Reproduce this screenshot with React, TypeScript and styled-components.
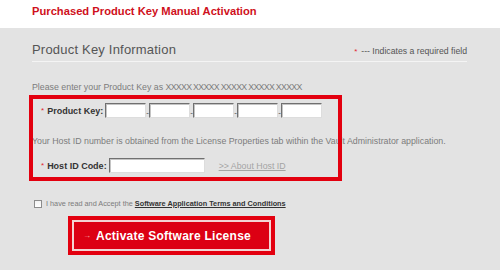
import styled, { createGlobalStyle } from "styled-components";

const GlobalStyle = createGlobalStyle`
  html, body {
    margin: 0;
    padding: 0;
    background: #e3e3e3;
    font-family: "Liberation Sans", Arial, sans-serif;
  }
`;

const Page = styled.div`
  width: 500px;
  min-height: 270px;
  background: #e3e3e3;
`;

const Header = styled.div`
  height: 28px;
  box-sizing: border-box;
  padding: 4px 0 0 32px;
  background: #ffffff;
`;

const Title = styled.h1`
  margin: 0;
  font-size: 11.2px;
  line-height: 14px;
  font-weight: bold;
  color: #cf1020;
`;

const Panel = styled.div`
  position: relative;
  padding: 0 33px 0 32px;
`;

const SectionHead = styled.div`
  display: flex;
  justify-content: space-between;
  align-items: baseline;
  padding: 15px 0 4px;
  border-bottom: 1px solid #f4f4f4;
`;

const SectionTitle = styled.h2`
  margin: 0;
  font-size: 13px;
  line-height: 14px;
  font-weight: normal;
  letter-spacing: 0.2px;
  color: #555555;
`;

const RequiredNote = styled.span`
  font-size: 8.7px;
  color: #555555;
`;

const Star = styled.span<{ $gap?: number }>`
  color: #e2262f;
  font-size: 8px;
  font-weight: normal;
  margin-right: ${(p) => p.$gap ?? 3}px;
`;

const Hint = styled.p<{ $top: number }>`
  margin: ${(p) => p.$top}px 0 0;
  font-size: 8.8px;
  line-height: 12px;
  color: #7c7c7c;
  white-space: nowrap;
`;

const Mask = styled.span`
  letter-spacing: -0.7px;
`;

const FieldRow = styled.div<{ $top: number }>`
  display: flex;
  align-items: center;
  margin-top: ${(p) => p.$top}px;
  padding-left: 9px;
`;

const Label = styled.label`
  font-size: 9px;
  font-weight: bold;
  color: #333333;
  margin-right: 2px;
  white-space: nowrap;
`;

const TextInput = styled.input<{ $w: number }>`
  box-sizing: border-box;
  width: ${(p) => p.$w}px;
  height: 15px;
  margin: 0;
  padding: 0 2px;
  background: #ffffff;
  border: 1px solid;
  border-color: #707070 #dddddd #dddddd #707070;
  box-shadow: inset 1px 1px 0 #c4c4c4;
  font-size: 9px;
  outline: none;
`;

const Dash = styled.span`
  width: 3px;
  font-size: 8px;
  color: #444444;
  text-align: center;
  padding-top: 4px;
`;

const HelpLink = styled.a`
  margin-left: 14px;
  font-size: 8.8px;
  color: #a4a4a4;
  text-decoration: underline;
`;

const CheckRow = styled.div`
  display: flex;
  align-items: center;
  margin-top: 26px;
  padding-left: 2px;
  font-size: 7.3px;
  color: #7c7c7c;
`;

const Check = styled.input`
  appearance: none;
  box-sizing: border-box;
  width: 8px;
  height: 8px;
  margin: 0 4px 0 0;
  border: 1px solid #8c8c8c;
  background: linear-gradient(#f2f2f2, #ffffff);
`;

const Terms = styled.a`
  margin-left: 2px;
  font-weight: bold;
  color: #333333;
  text-decoration: underline;
`;

const ButtonFrame = styled.div`
  display: inline-block;
  margin: 8px 0 0 36px;
  border: 4px solid #e3000f;
`;

const ActivateButton = styled.button`
  display: flex;
  align-items: center;
  box-sizing: border-box;
  width: 199px;
  height: 31px;
  margin: 0;
  padding: 0 0 0 9px;
  border: 2px solid #f3d3d3;
  background: #dc0013;
  color: #ffffff;
  font-family: "Liberation Sans", Arial, sans-serif;
  font-size: 12px;
  font-weight: bold;
  letter-spacing: 0.25px;
  cursor: pointer;
`;

const Arrow = styled.span`
  font-size: 8px;
  color: #f6a6a6;
  margin-right: 5px;
  letter-spacing: 0;
`;

const Highlight = styled.div`
  position: absolute;
  left: 29px;
  top: 67px;
  width: 313px;
  height: 86px;
  box-sizing: border-box;
  border: 4px solid #e3000f;
  pointer-events: none;
`;

function App() {
  const keyParts = [0, 1, 2, 3, 4];

  return (
    <Page>
      <GlobalStyle />
      <Header>
        <Title>Purchased Product Key Manual Activation</Title>
      </Header>
      <Panel>
        <SectionHead>
          <SectionTitle>Product Key Information</SectionTitle>
          <RequiredNote>
            <Star $gap={4}>*</Star>--- Indicates a required field
          </RequiredNote>
        </SectionHead>

        <Hint $top={19}>
          Please enter your Product Key as{" "}
          <Mask>XXXXX XXXXX XXXXX XXXXX XXXXX</Mask>
        </Hint>

        <FieldRow $top={10}>
          <Star>*</Star>
          <Label>Product Key:</Label>
          {keyParts.map((i) => (
            <span key={i} style={{ display: "contents" }}>
              {i > 0 && <Dash>-</Dash>}
              <TextInput $w={41} maxLength={5} />
            </span>
          ))}
        </FieldRow>

        <Hint $top={17}>
          Your Host ID number is obtained from the License Properties tab within
          the Vault Administrator application.
        </Hint>

        <FieldRow $top={11}>
          <Star>*</Star>
          <Label>Host ID Code:</Label>
          <TextInput $w={96} />
          <HelpLink href="#">&gt;&gt; About Host ID</HelpLink>
        </FieldRow>

        <CheckRow>
          <Check type="checkbox" />
          I have read and Accept the
          <Terms href="#">Software Application Terms and Conditions</Terms>
        </CheckRow>

        <ButtonFrame>
          <ActivateButton>
            <Arrow>→</Arrow>
            Activate Software License
          </ActivateButton>
        </ButtonFrame>

        <Highlight />
      </Panel>
    </Page>
  );
}

export default App;
